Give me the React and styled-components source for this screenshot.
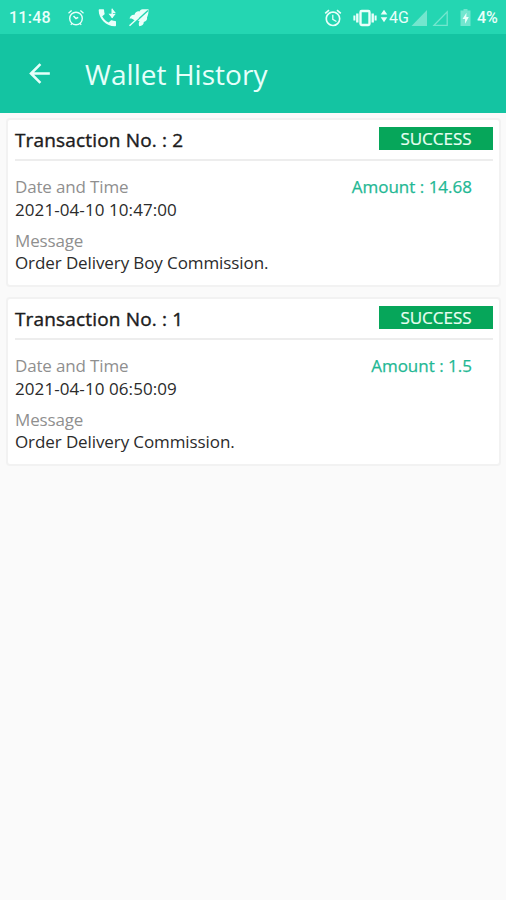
import React from "react"
import styled, { createGlobalStyle } from "styled-components"
import { MdAlarm, MdArrowBack } from "react-icons/md"

const transactions = [
  {
    id: 2,
    status: "SUCCESS",
    date: "2021-04-10 10:47:00",
    amount: "14.68",
    message: "Order Delivery Boy Commission.",
  },
  {
    id: 1,
    status: "SUCCESS",
    date: "2021-04-10 06:50:09",
    amount: "1.5",
    message: "Order Delivery Commission.",
  },
]

export default function App() {
  return (
    <Screen>
      <GlobalStyle />
      <StatusBar />
      <Header>
        <BackButton aria-label="Back">
          <MdArrowBack size={31} />
        </BackButton>
        <Title>Wallet History</Title>
      </Header>
      <List>
        {transactions.map((transaction) => (
          <TransactionCard key={transaction.id} {...transaction} />
        ))}
      </List>
    </Screen>
  )
}

function TransactionCard(props) {
  return (
    <Card>
      <CardHeader>
        <CardTitle>Transaction No. : {props.id}</CardTitle>
        <Badge>{props.status}</Badge>
      </CardHeader>
      <CardBody>
        <Row>
          <Label>Date and Time</Label>
          <Amount>Amount : {props.amount}</Amount>
        </Row>
        <Value $spacing="0.08px">{props.date}</Value>
        <Label $top="9px">Message</Label>
        <Value $spacing="-0.1px">{props.message}</Value>
      </CardBody>
    </Card>
  )
}

function StatusBar() {
  return (
    <StatusWrapper>
      <StatusGroup>
        <StatusText $width="42px" $spacing="0.25px">
          11:48
        </StatusText>
        <StatusIcon $left="16px">
          <ThinAlarmIcon />
        </StatusIcon>
        <StatusIcon $left="13px">
          <CallIcon />
        </StatusIcon>
        <StatusIcon $left="10px">
          <LeafOffIcon />
        </StatusIcon>
      </StatusGroup>
      <StatusGroup>
        <StatusIcon>
          <MdAlarm size={20} />
        </StatusIcon>
        <StatusIcon $left="10px">
          <VibrateIcon />
        </StatusIcon>
        <StatusIcon $left="3px">
          <DataIcon />
        </StatusIcon>
        <StatusText $width="20px" $weight={400} $left="1px">
          4G
        </StatusText>
        <StatusIcon $left="2px">
          <SignalIcon filled />
        </StatusIcon>
        <StatusIcon $left="4px">
          <SignalIcon />
        </StatusIcon>
        <StatusIcon $left="11px">
          <BatteryIcon />
        </StatusIcon>
        <StatusText $width="22px" $left="6px">
          4%
        </StatusText>
      </StatusGroup>
    </StatusWrapper>
  )
}

function ThinAlarmIcon() {
  return (
    <svg width="18" height="18" viewBox="0 0 18 18" fill="none" stroke="currentColor">
      <circle cx="9" cy="9.5" r="6.3" strokeWidth="1.4" />
      <path d="M1.5 4.2 4.6 1.6M16.5 4.2 13.4 1.6M3.8 15.8l1.2-1.4M14.2 15.8 13 14.4" strokeWidth="1.3" />
      <path d="M6.5 7 9 9.5l2.2-1.2" strokeWidth="1.5" />
    </svg>
  )
}

function CallIcon() {
  return (
    <svg width="20" height="19" viewBox="0 0 20 19" fill="currentColor">
      <path d="M4.2 8.2c1.5 2.8 3.7 5 6.5 6.4l2.1-2.1c.3-.3.7-.4 1-.2 1.100.4 2.300.6 3.200.6.6 0 1 .4 1 1v3.300c0 .6-.4 1-1 1C8.200 18.200.700 10.700.700 2.200c0-.6.400-1 1-1H5.100c.6 0 1 .4 1 1 0 1.200.2 2.300.5 3.300.1.400 0 .8-.2 1z" />
      <path d="M14.200.8v9" fill="none" stroke="currentColor" strokeWidth="1.400" />
      <path d="M14.200.5 17.800 5h-3.600zM14.200 10.200 10.500 5.800h7.300z" />
    </svg>
  )
}

function LeafOffIcon() {
  return (
    <svg width="22" height="20" viewBox="0 0 22 20">
      <path
        d="M20.500 1.200h-6c-1.500.3-2.600 1.200-3 2.300C10 2.500 7 3.800 6.500 6.800 4 6.500 2.200 8 1.500 10.500c2-.3 3.500.3 4.500 1.500l5.500 1c-.8 1.800-1 3.500-.2 5.200 2.700-.2 4.500-1.700 4.500-4.200 2.500-.8 3.700-2.500 3.200-4.500 1.200-2.500 1.700-5.500 1.500-8.300z"
        fill="currentColor"
      />
      <path d="M2.500 18.500 20 2.500" stroke="#24d6b2" strokeWidth="1.400" />
      <path d="M1.500 17.800 10.500 9.500" stroke="currentColor" strokeWidth="1.500" />
    </svg>
  )
}

function VibrateIcon() {
  return (
    <svg width="24" height="18" viewBox="0 0 24 18" fill="none" stroke="currentColor">
      <rect x="7.500" y="2" width="9" height="14" rx="1.200" strokeWidth="2.400" />
      <path d="M4.300 4.500v9M19.700 4.500v9" strokeWidth="2.400" />
      <path d="M1.400 6.500v5M22.600 6.500v5" strokeWidth="2" />
    </svg>
  )
}

function DataIcon() {
  return (
    <svg width="8" height="18" viewBox="0 0 8 18" fill="currentColor">
      <path d="M4 .8 7.300 5.500H.7zM4 13.200 7.300 8.200H.7z" />
    </svg>
  )
}

function SignalIcon({ filled }) {
  return (
    <svg width="17" height="18" viewBox="0 0 17 18" opacity="0.400">
      {filled ? (
        <path d="M.5 17 16 1v16z" fill="currentColor" />
      ) : (
        <path d="M2 16.300 15.200 2.800v13.500z" fill="none" stroke="currentColor" strokeWidth="1.300" />
      )}
    </svg>
  )
}

function BatteryIcon() {
  return (
    <svg width="11" height="19" viewBox="0 0 11 19">
      <path d="M3.500 1h4v1.500h3V18H.5V2.500h3z" fill="currentColor" opacity="0.400" />
      <path d="M6.500 4.800 2.500 11h2.600v4.700L8.800 9H6.300z" fill="currentColor" />
    </svg>
  )
}

const GlobalStyle = createGlobalStyle`
  * {
    box-sizing: border-box;
  }

  body {
    margin: 0;
    background: #fafafa;
    font-family: "Open Sans", sans-serif;
  }
`

const Screen = styled.div`
  min-height: 900px;
  background: #fafafa;
`

const StatusWrapper = styled.div`
  display: flex;
  justify-content: space-between;
  align-items: center;
  height: 34px;
  padding: 1px 7px 0 9px;
  background: #24d6b2;
  color: #e9fffa;
`

const StatusGroup = styled.div`
  display: flex;
  align-items: center;
`

const StatusIcon = styled.span`
  display: flex;
  margin-left: ${(props) => props.$left || 0};
`

const StatusText = styled.span`
  width: ${(props) => props.$width};
  margin-left: ${(props) => props.$left || 0};
  font-family: Roboto, sans-serif;
  font-size: 16px;
  font-weight: ${(props) => props.$weight || 500};
  letter-spacing: ${(props) => props.$spacing || "normal"};
  line-height: 20px;
  white-space: nowrap;
`

const Header = styled.header`
  display: flex;
  align-items: center;
  height: 79px;
  padding-left: 24px;
  background: #14c4a2;
  color: #e6fffa;
`

const BackButton = styled.button`
  display: flex;
  padding: 0;
  border: 0;
  background: none;
  color: inherit;
`

const Title = styled.h1`
  margin: 0 0 0 30px;
  font-size: 28px;
  font-weight: 400;
  letter-spacing: 0.05px;
  line-height: 38px;
`

const List = styled.main`
  display: grid;
  gap: 10px;
  padding: 5px 5px 0 6px;
`

const Card = styled.section`
  height: 169px;
  padding: 5px 6px 0 7px;
  background: #fff;
  border: 2px solid #f2f2f2;
  border-radius: 4px;
`

const CardHeader = styled.div`
  display: flex;
  justify-content: space-between;
  height: 36px;
  border-bottom: 2px solid #ededed;
`

const CardTitle = styled.h2`
  margin: 0;
  color: #1c1c1c;
  font-size: 19px;
  font-weight: 500;
  letter-spacing: 0.16px;
  line-height: 30px;
  -webkit-text-stroke: 0.4px #1c1c1c;
`

const Badge = styled.span`
  width: 114px;
  height: 23px;
  margin-top: 2px;
  background: #06a65a;
  color: #e8fff2;
  font-size: 17px;
  line-height: 23px;
  text-align: center;
  -webkit-text-stroke: 0.2px #e8fff2;
`

const CardBody = styled.div`
  padding-top: 15px;
`

const Row = styled.div`
  display: flex;
  justify-content: space-between;
  padding-right: 21px;
`

const Label = styled.div`
  margin-top: ${(props) => props.$top || 0};
  color: #8f8f8f;
  font-size: 17px;
  letter-spacing: -0.16px;
  line-height: 22px;
`

const Value = styled.div`
  padding-top: 0.5px;
  color: #2b2b2b;
  font-size: 17px;
  letter-spacing: ${(props) => props.$spacing};
  line-height: 22px;
`

const Amount = styled.div`
  color: #1fb894;
  font-size: 17px;
  font-weight: 500;
  line-height: 22px;
  -webkit-text-stroke: 0.25px #1fb894;
`
